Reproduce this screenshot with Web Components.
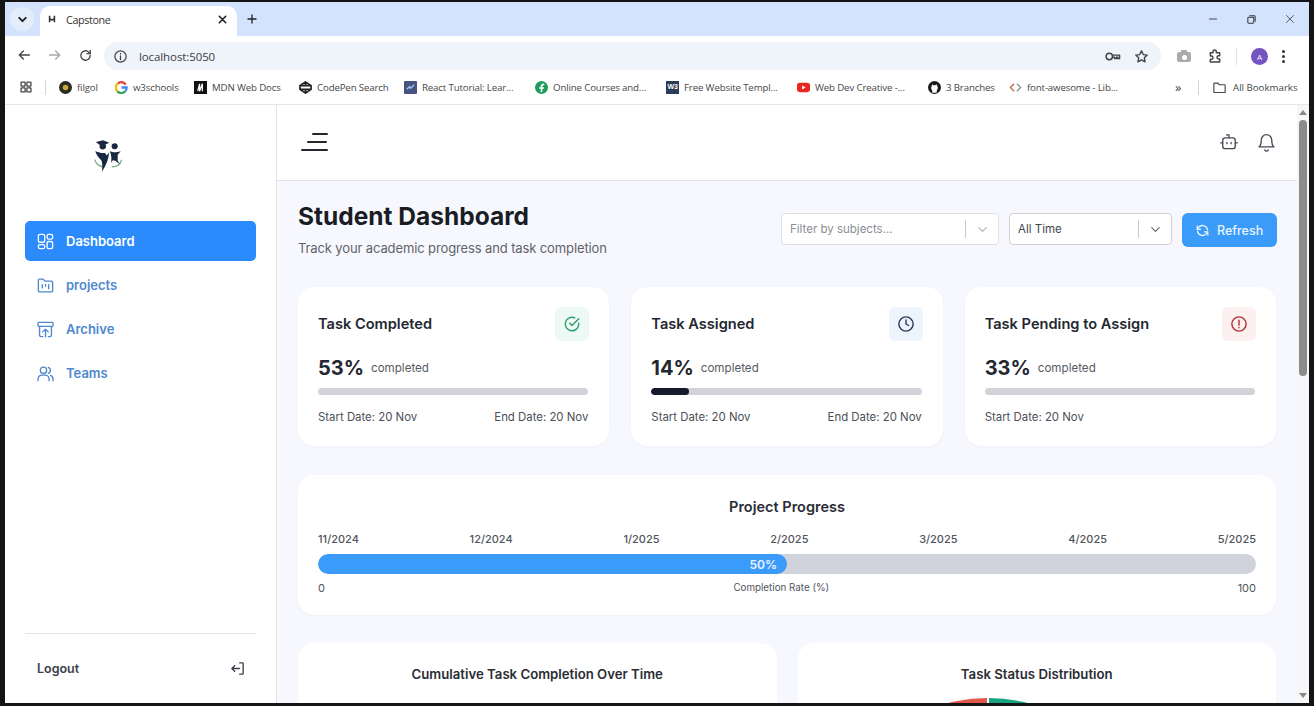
<!DOCTYPE html>
<html lang="en">
<head>
<meta charset="utf-8">
<title>Capstone</title>
<style>
  html, body { margin: 0; height: 100%; overflow: hidden; background: #141414; }
</style>
</head>
<body>
<app-shell></app-shell>
<script>
// icon paths, all drawn on a 24x24 grid
const ICONS = {
  dashboard: '<rect x="3" y="3" width="8" height="10" rx="2"/><rect x="14" y="3" width="7" height="6" rx="2"/><rect x="14" y="12" width="7" height="9" rx="2"/><rect x="3" y="16" width="8" height="5" rx="2"/>',
  projects: '<path d="M3 5.5A1.5 1.5 0 0 1 4.5 4H9l2.5 2.5h8A1.5 1.5 0 0 1 21 8v10.5a1.5 1.5 0 0 1-1.5 1.5h-15A1.5 1.5 0 0 1 3 18.500z"/><path d="M8 11v4M12 11v2M16 11v5"/>',
  archive: '<rect x="2.500" y="3" width="19" height="5" rx="1"/><path d="M4.500 8v11a2 2 0 0 0 2 2h2M19.500 8v11a2 2 0 0 1-2 2h-2"/><path d="M12 21v-9M8.500 15l3.500-3.500 3.500 3.500"/>',
  teams: '<circle cx="9.500" cy="8" r="4"/><path d="M2.500 21v-2a5 5 0 0 1 5-5h4a5 5 0 0 1 5 5v2"/><path d="M15.500 4.200a4 4 0 0 1 0 7.600M18.500 14.300a5 5 0 0 1 3 4.700v2"/>',
  logout: '<path d="M15 4h4a1 1 0 0 1 1 1v14a1 1 0 0 1-1 1h-4"/><path d="M15 12H4M8 8l-4 4 4 4"/>',
  bot: '<path d="M12 7V3.500H9"/><rect x="4.500" y="7" width="15" height="13" rx="3"/><path d="M2 13h2.500M19.500 13H22M9.500 12.500v1.500M14.500 12.500v1.500"/>',
  bell: '<path d="M6 9a6 6 0 0 1 12 0c0 6 2.500 8 2.500 8h-17S6 15 6 9"/><path d="M10 20.500a2.200 2.200 0 0 0 4 0"/>',
  refresh: '<path d="M20 11a8 8 0 0 0-14.500-3.500L3.500 10M3.500 4.500V10H9"/><path d="M4 13a8 8 0 0 0 14.500 3.500l2-2.500M20.500 19.500V14H15"/>',
  check: '<path d="M21 11v1a9 9 0 1 1-5.300-8.200"/><path d="M21 5l-9 9-3-3"/>',
  clock: '<circle cx="12" cy="12" r="9.500"/><path d="M12 6.500V12l3.500 2"/>',
  alert: '<circle cx="12" cy="12" r="9.500"/><path d="M12 7v6.500M12 16.500v.5"/>',
  chevron: '<path d="M6 9l6 6 6-6"/>',
  back: '<path d="M20 12H5M11 6l-6 6 6 6"/>',
  forward: '<path d="M4 12h15M13 6l6 6-6 6"/>',
  reload: '<path d="M19.500 12a7.500 7.500 0 1 1-2.300-5.400L19.500 9"/><path d="M19.500 4v5h-5"/>',
  info: '<circle cx="12" cy="12" r="9"/><path d="M12 11v6M12 7v1"/>',
  key: '<circle cx="7.500" cy="12" r="4.500"/><path d="M12 10h10v5h-2.500v-2h-2v2H15v-2h-3"/>',
  star: '<path d="M12 3l2.800 5.900 6.400.8-4.700 4.400 1.200 6.400L12 17.300l-5.700 3.200 1.200-6.400L2.800 9.700l6.400-.8z"/>',
  extension: '<path d="M9 5.500a2.500 2.500 0 0 1 5 0V7h5v4.500h-1.500a2.500 2.500 0 0 0 0 5H19V21H5v-4h1.500a2.500 2.500 0 0 0 0-5H5V7h4z"/>',
  folder: '<path d="M3 6a1 1 0 0 1 1-1h5.500l2 2.500H20a1 1 0 0 1 1 1V19a1 1 0 0 1-1 1H4a1 1 0 0 1-1-1z"/>',
  apps: '<rect x="3.500" y="3.500" width="7" height="7" rx="1"/><rect x="13.500" y="3.500" width="7" height="7" rx="1"/><rect x="3.500" y="13.500" width="7" height="7" rx="1"/><rect x="13.500" y="13.500" width="7" height="7" rx="1"/>',
  close: '<path d="M5 5l14 14M19 5L5 19"/>',
  plus: '<path d="M12 4v16M4 12h16"/>',
  minus: '<path d="M5 12h14"/>',
  restore: '<rect x="4" y="7" width="13" height="13" rx="2"/><path d="M8 4h10a2 2 0 0 1 2 2v10"/>',
};

class UiIcon extends HTMLElement {
  connectedCallback() {
    const size = this.getAttribute('size') || 18;
    const sw = this.getAttribute('sw') || 2;
    this.attachShadow({ mode: 'open' }).innerHTML = `
      <style>
        :host { display: inline-flex; flex: none; width: ${size}px; height: ${size}px; }
        svg { width: 100%; height: 100%; display: block; }
      </style>
      <svg viewBox="0 0 24 24" fill="none" stroke="currentColor" stroke-width="${sw}"
           stroke-linecap="round" stroke-linejoin="round">${ICONS[this.getAttribute('name')] || ''}</svg>`;
  }
}
customElements.define('ui-icon', UiIcon);

class BrowserTabs extends HTMLElement {
  constructor() {
    super();
    this.attachShadow({ mode: 'open' }).innerHTML = `
      <style>
        :host {
          display: flex; align-items: flex-end; height: 34px; background: #d3e3fd; color: #1f1f1f;
          font: 12px "Open Sans", sans-serif;
        }
        .menu {
          width: 24px; height: 24px; margin: 0 6px 5px 5px; border-radius: 50%; background: #e4edfc;
          display: flex; align-items: center; justify-content: center;
        }
        .tab {
          width: 197px; height: 30px; background: #fff; border-radius: 10px 10px 0 0;
          display: flex; align-items: center; padding: 0 9px 4px 8px; box-sizing: border-box; gap: 10px;
        }
        .title { flex: 1; font-size: 10.800px; letter-spacing: -.4px; color: #333; }
        .plus { margin: 0 0 11px 9px; display: flex; }
        .spacer { flex: 1; }
        .win { display: flex; align-items: center; gap: 27px; margin: 0 13px 11px 0; color: #333; }
        .fav { width: 8px; height: 8px; }
      </style>
      <div class="menu"><ui-icon name="chevron" size="13" sw="3.5"></ui-icon></div>
      <div class="tab">
        <svg class="fav" viewBox="0 0 10 10"><path d="M2 1v8M8 1v8M2 5l3 1 3-1" stroke="#333" stroke-width="2" fill="none"/></svg>
        <span class="title">Capstone</span>
        <ui-icon name="close" size="11" sw="3.500"></ui-icon>
      </div>
      <div class="plus"><ui-icon name="plus" size="12" sw="2.600"></ui-icon></div>
      <div class="spacer"></div>
      <div class="win">
        <ui-icon name="minus" size="12" sw="1.800"></ui-icon>
        <ui-icon name="restore" size="11" sw="2.200"></ui-icon>
        <ui-icon name="close" size="12" sw="1.500"></ui-icon>
      </div>`;
  }
}
customElements.define('browser-tabs', BrowserTabs);

class BrowserToolbar extends HTMLElement {
  constructor() {
    super();
    this.attachShadow({ mode: 'open' }).innerHTML = `
      <style>
        :host {
          display: flex; align-items: center; height: 34px; background: #fff; color: #444;
          font: 12px "Open Sans", sans-serif; padding-left: 11px; box-sizing: border-box;
        }
        .nav { display: flex; gap: 15px; align-items: center; margin: 4px 11px 0 0; }
        .dim { color: #a4a7ac; }
        .omni {
          width: 1057px; height: 28px; margin-top: 6px; border-radius: 14px; background: #eff3fa; box-sizing: border-box;
          display: flex; align-items: center; padding: 0 12px 0 9px; margin-right: 16px;
        }
        .omni .txt { margin-left: 11px; flex: 1; color: #3c4043; font-size: 11.500px; letter-spacing: -.1px; }
        .omni .r { display: flex; gap: 13px; align-items: center; color: #3f4246; }
        .ext { display: flex; align-items: center; margin-top: 6px; }
        .cam { position: relative; width: 14px; height: 10px; margin-top: 2px; border-radius: 2px; background: #a8abaf; display: flex; align-items: center; justify-content: center; }
        .cam::before { content: ""; position: absolute; top: -2px; left: 4px; width: 6px; height: 2px; background: #a8abaf; }
        .cam i { width: 5px; height: 5px; border-radius: 50%; background: #fff; }
        .puzzle { margin-left: 16px; }
        .sep { width: 1px; height: 17px; background: #e0e2e6; margin: 0 14px 0 13px; }
        .avatar { width: 17px; height: 17px; border-radius: 50%; background: #7354c0; color: #fff; font-size: 8px; display: flex; align-items: center; justify-content: center; }
        .dots { display: flex; flex-direction: column; gap: 2px; margin-left: 14px; }
        .dots i { width: 3px; height: 3px; border-radius: 50%; background: #333; }
      </style>
      <div class="nav">
        <ui-icon name="back" size="16" sw="2"></ui-icon>
        <ui-icon class="dim" name="forward" size="16" sw="2"></ui-icon>
        <ui-icon name="reload" size="15" sw="2.200"></ui-icon>
      </div>
      <div class="omni">
        <ui-icon name="info" size="15" sw="2"></ui-icon>
        <span class="txt">localhost:5050</span>
        <div class="r">
          <ui-icon name="key" size="17" sw="2"></ui-icon>
          <ui-icon name="star" size="15" sw="2.200"></ui-icon>
        </div>
      </div>
      <div class="ext">
        <div class="cam"><i></i></div>
        <ui-icon class="puzzle" name="extension" size="16" sw="2.200"></ui-icon>
        <div class="sep"></div>
        <div class="avatar">A</div>
        <div class="dots"><i></i><i></i><i></i></div>
      </div>`;
  }
}
customElements.define('browser-toolbar', BrowserToolbar);

// one bookmark: favicon goes in the slot, "w" fixes the width of the item
class BookMark extends HTMLElement {
  connectedCallback() {
    this.attachShadow({ mode: 'open' }).innerHTML = `
      <style>
        :host { display: flex; align-items: center; gap: 5px; flex: none; width: ${this.getAttribute('w')}px; white-space: nowrap; }
        ::slotted(svg) { width: 13px; height: 13px; flex: none; }
        span { color: #474747; font-size: 9.700px; letter-spacing: -.15px; }
      </style>
      <slot></slot><span>${this.getAttribute('label')}</span>`;
  }
}
customElements.define('book-mark', BookMark);

class BookmarkBar extends HTMLElement {
  constructor() {
    super();
    this.attachShadow({ mode: 'open' }).innerHTML = `
      <style>
        :host {
          display: flex; align-items: center; height: 35px; background: #fff; border-bottom: 1px solid #e6e6e6;
          box-sizing: border-box; font: 9.700px "Open Sans", sans-serif; padding-left: 14px;
        }
        .sep { width: 1px; height: 15px; background: #d6d6d6; margin: 0 13px 0 12px; }
        .items { display: flex; gap: 14px; }
        .more { margin-left: 54px; color: #444; font-size: 13px; width: 14px; }
        .end { display: flex; align-items: center; margin-left: 9px; gap: 6px; color: #474747; }
        .end .sep { margin: 0 7px 0 0; }
      </style>
      <ui-icon name="apps" size="14" sw="2.200" style="color:#444"></ui-icon>
      <div class="sep"></div>
      <div class="items">
        <book-mark w="42" label="filgol"><svg viewBox="0 0 14 14"><circle cx="7" cy="7" r="7" fill="#2b2b22"/><circle cx="7" cy="7" r="3" fill="#c9a93a"/></svg></book-mark>
        <book-mark w="65" label="w3schools"><svg viewBox="0 0 14 14" fill="none" stroke-width="2.500"><path d="M11.500 4A5.500 5.500 0 0 0 3 2.800" stroke="#e94235"/><path d="M3 2.800A5.500 5.500 0 0 0 2.500 11" stroke="#fabb05"/><path d="M2.500 11A5.500 5.500 0 0 0 11 11" stroke="#34a853"/><path d="M11 11c1-1 1.500-2 1.500-4H7" stroke="#4285f4"/></svg></book-mark>
        <book-mark w="91" label="MDN Web Docs"><svg viewBox="0 0 14 14"><rect width="14" height="14" fill="#111"/><path d="M4 11l2-8v8l3-8v8" stroke="#fff" fill="none" stroke-width="1.300"/></svg></book-mark>
        <book-mark w="91" label="CodePen Search"><svg viewBox="0 0 14 14" fill="none" stroke="#222" stroke-width="1.800"><path d="M7 1l6 4v4l-6 4-6-4V5zM7 1v4l-6 0M7 13V9l6 0M1 9h12M1 5h12"/></svg></book-mark>
        <book-mark w="117" label="React Tutorial: Lear..."><svg viewBox="0 0 14 14"><rect width="14" height="14" rx="1" fill="#46537f"/><path d="M3 9l3-3 1 2 4-4" stroke="#9fc3ef" fill="none" stroke-width="1.500"/></svg></book-mark>
        <book-mark w="117" label="Online Courses and..."><svg viewBox="0 0 14 14"><circle cx="7" cy="7" r="7" fill="#1d9c5c"/><path d="M7 12V6a2 2 0 0 1 3-2M4.500 7.500h5" stroke="#fff" fill="none" stroke-width="1.800"/></svg></book-mark>
        <book-mark w="117" label="Free Website Templ..."><svg viewBox="0 0 14 14"><rect width="14" height="14" fill="#2b3a55"/><text x="1.500" y="9" font-size="7.500" font-family="Liberation Sans" font-weight="700" fill="#fff">W3</text></svg></book-mark>
        <book-mark w="117" label="Web Dev Creative -..."><svg viewBox="0 0 14 14"><rect y="2" width="14" height="10" rx="3" fill="#e8281e"/><path d="M5.500 4.800v4.400L9.300 7z" fill="#fff"/></svg></book-mark>
        <book-mark w="67" label="3 Branches"><svg viewBox="0 0 14 14"><circle cx="7" cy="7" r="7" fill="#1a1a1a"/><path d="M4 14v-3c-1-1-1.500-2-1.500-3.500 0-1 .5-2 1-2.500 0-1 0-1.500.3-2 1 0 1.500.5 2 1h2.400c.5-.5 1-1 2-1 .3.500.3 1 .3 2 .5.500 1 1.500 1 2.500 0 1.500-.5 2.500-1.500 3.500v3z" fill="#fff" transform="translate(1.400 1.400) scale(.8)"/></svg></book-mark>
        <book-mark w="112" label="font-awesome - Lib..."><svg viewBox="0 0 14 14" fill="none" stroke-width="1.400"><path d="M5.500 3L1.500 7l4 4" stroke="#c5683a"/><path d="M8.500 3l4 4-4 4" stroke="#8a8f99"/></svg></book-mark>
      </div>
      <div class="more">»</div>
      <div class="end">
        <div class="sep"></div>
        <ui-icon name="folder" size="15" sw="1.800" style="color:#444"></ui-icon>
        <span>All Bookmarks</span>
      </div>`;
  }
}
customElements.define('bookmark-bar', BookmarkBar);

class NavItem extends HTMLElement {
  connectedCallback() {
    const active = this.hasAttribute('active');
    this.attachShadow({ mode: 'open' }).innerHTML = `
      <style>
        :host {
          display: flex; align-items: center; gap: 11px; height: ${active ? 40 : 44}px; padding-left: 11px;
          border-radius: 5px; font-size: 13px; font-weight: 600;
          color: ${active ? '#fff' : '#4f88cd'}; background: ${active ? '#2b8bfd' : 'transparent'};
          ${active ? 'margin-bottom: 2px;' : ''}
        }
      </style>
      <ui-icon name="${this.getAttribute('icon')}" size="19" sw="1.700"></ui-icon>
      <slot></slot>`;
  }
}
customElements.define('nav-item', NavItem);

class SideNav extends HTMLElement {
  constructor() {
    super();
    this.attachShadow({ mode: 'open' }).innerHTML = `
      <style>
        :host {
          display: flex; flex-direction: column; flex: none; width: 272px; box-sizing: border-box;
          background: #fff; border-right: 1px solid #e4e4ea; padding: 0 20px;
        }
        .logo { display: flex; padding: 34px 0 0 66px; height: 116px; box-sizing: border-box; }
        .logo svg { width: 34px; height: 34px; }
        nav { display: flex; flex-direction: column; }
        .foot {
          margin-top: auto; border-top: 1px solid #e6e6ea; height: 70px; box-sizing: border-box; padding: 0 10px 1px 12px;
          display: flex; align-items: center; justify-content: space-between;
          color: #3a404c; font-size: 12.500px; font-weight: 600;
        }
      </style>
      <div class="logo">
        <svg viewBox="0 0 28 28">
          <path d="M3 17c1 4 5 6 8 6M25 17c0 3-3 6-8 6" stroke="#7fae96" fill="none" stroke-width="1.100"/>
          <path d="M4 2.500l6-1.500 5 2-3 1.500.5 2A3 3 0 0 1 7 7l.2-2z" fill="#182843"/>
          <path d="M3.500 10l5 1.500h3l1.500 2 2-2.500c-.5 5-2 10-6 16 .5-4 .5-7-.5-9.500C6 15 4.500 13 3.500 10z" fill="#182843"/>
          <circle cx="19.500" cy="6" r="2.500" fill="#182843"/>
          <path d="M15.500 10l3 1h2.500l3.500-1-2.500 3v5l2 3-4-3-2-.5-1.500 2c.5-3 .5-6-1-9.500z" fill="#182843"/>
        </svg>
      </div>
      <nav>
        <nav-item active icon="dashboard">Dashboard</nav-item>
        <nav-item icon="projects">projects</nav-item>
        <nav-item icon="archive">Archive</nav-item>
        <nav-item icon="teams">Teams</nav-item>
      </nav>
      <div class="foot"><span>Logout</span><ui-icon name="logout" size="17" sw="1.900"></ui-icon></div>`;
  }
}
customElements.define('side-nav', SideNav);

class TopBar extends HTMLElement {
  constructor() {
    super();
    this.attachShadow({ mode: 'open' }).innerHTML = `
      <style>
        :host {
          display: flex; align-items: center; justify-content: space-between; flex: none; height: 76px;
          background: #fff; border-bottom: 1px solid #e2e3e8; box-sizing: border-box; padding: 0 20px 0 24px; color: #454a52;
        }
        .burger { display: flex; flex-direction: column; align-items: flex-end; gap: 6px; width: 27px; margin-top: -2px; }
        .burger i { display: block; height: 2px; background: #23272e; border-radius: 1px; }
        .r { display: flex; align-items: center; gap: 17px; margin-top: -1px; }
      </style>
      <div class="burger"><i style="width:16px"></i><i style="width:20px;margin-right:1px"></i><i style="width:27px"></i></div>
      <div class="r"><ui-icon name="bot" size="20" sw="1.600"></ui-icon><ui-icon name="bell" size="21" sw="1.500"></ui-icon></div>`;
  }
}
customElements.define('top-bar', TopBar);

class SelectBox extends HTMLElement {
  connectedCallback() {
    const ph = this.hasAttribute('placeholder');
    this.attachShadow({ mode: 'open' }).innerHTML = `
      <style>
        :host {
          display: flex; align-items: center; flex: none; width: ${this.getAttribute('w')}px; height: 32px; box-sizing: border-box;
          background: #fff; border: 1px solid ${ph ? '#dfe0e6' : '#cfd0d6'}; border-radius: 4px; padding: 0 8px;
          font-size: 11.500px; color: ${ph ? '#8a8d94' : '#43464d'};
        }
        span { flex: 1; }
        i { width: 1px; height: 18px; background: #c8c9ce; margin-right: 9px; }
        ui-icon { color: ${ph ? '#b4b6bb' : '#6a6d73'}; }
      </style>
      <span><slot></slot></span><i></i><ui-icon name="chevron" size="15" sw="2"></ui-icon>`;
  }
}
customElements.define('select-box', SelectBox);

class StatCard extends HTMLElement {
  connectedCallback() {
    const a = n => this.getAttribute(n);
    const end = a('end') ? `<span>End Date: ${a('end')}</span>` : '';
    const fill = a('fill') ? `<div class="fill" style="width:${a('fill')}"></div>` : '';
    this.attachShadow({ mode: 'open' }).innerHTML = `
      <style>
        :host {
          display: block; flex: 1 1 0; min-width: 0; box-sizing: border-box; height: 159px; padding: 20px 21px 0 20px;
          background: #fff; border-radius: 16px; box-shadow: 0 1px 3px rgba(60,70,110,.04);
        }
        .head { display: flex; align-items: center; justify-content: space-between; height: 34px; }
        h3 { margin: 0; font-size: 14.600px; font-weight: 600; color: #23272f; }
        .tile { width: 34px; height: 34px; margin-right: -1px; border-radius: 6px; display: flex; align-items: center; justify-content: center; background: ${a('tile')}; color: ${a('tint')}; }
        .val { display: flex; align-items: center; gap: 7px; margin-top: 13px; height: 28px; }
        b { font-size: 20px; font-weight: 700; color: #23272f; }
        .val span { font-size: 11.600px; color: #575b63; }
        .bar { height: 7px; margin-top: 6px; border-radius: 4px; background: #d2d3da; overflow: hidden; }
        .fill { height: 100%; background: #171a2b; border-radius: 4px; }
        .dates { display: flex; justify-content: space-between; margin-top: 15px; font-size: 11.400px; color: #4b4f57; }
      </style>
      <div class="head"><h3>${a('title')}</h3><div class="tile"><ui-icon name="${a('icon')}" size="18" sw="1.900"></ui-icon></div></div>
      <div class="val"><b>${a('pct')}</b><span>completed</span></div>
      <div class="bar">${fill}</div>
      <div class="dates"><span>Start Date: ${a('start')}</span>${end}</div>`;
  }
}
customElements.define('stat-card', StatCard);

class ProjectProgress extends HTMLElement {
  constructor() {
    super();
    const months = ['11/2024', '12/2024', '1/2025', '2/2025', '3/2025', '4/2025', '5/2025'];
    this.attachShadow({ mode: 'open' }).innerHTML = `
      <style>
        :host {
          display: block; flex: none; height: 140px; box-sizing: border-box; padding: 22px 20px 0; background: #fff; border-radius: 16px;
          box-shadow: 0 1px 3px rgba(60,70,110,.04);
        }
        h3 { margin: 0; text-align: center; font-size: 14.500px; font-weight: 600; color: #2a2d35; line-height: 20px; }
        .row { display: flex; justify-content: space-between; color: #50545c; }
        .months { margin-top: 16px; font-size: 11px; font-weight: 500; height: 13px; line-height: 13px; }
        .track { height: 20px; margin-top: 8px; border-radius: 10px; background: #d0d2dc; overflow: hidden; }
        .fill {
          width: 50%; height: 100%; background: #3a9bfb; border-radius: 10px; color: #e8f3ff; font-size: 12px; font-weight: 600;
          display: flex; align-items: center; justify-content: flex-end; padding-right: 10px; box-sizing: border-box;
        }
        .scale { margin-top: 7px; line-height: 14px; font-size: 11px; align-items: center; }
        .scale .mid { font-size: 9.800px; }
      </style>
      <h3>Project Progress</h3>
      <div class="row months">${months.map(m => `<span>${m}</span>`).join('')}</div>
      <div class="track"><div class="fill">50%</div></div>
      <div class="row scale"><span>0</span><span class="mid">Completion Rate (%)</span><span>100</span></div>`;
  }
}
customElements.define('project-progress', ProjectProgress);

class ChartCard extends HTMLElement {
  connectedCallback() {
    this.attachShadow({ mode: 'open' }).innerHTML = `
      <style>
        :host { display: block; flex: 1 1 0; min-width: 0; height: 340px; box-sizing: border-box; padding-top: 22px; background: #fff; border-radius: 16px; }
        h3 { margin: 0; text-align: center; font-size: 13.200px; font-weight: 600; color: #2a2d35; line-height: 18px; }
      </style>
      <h3>${this.getAttribute('title')}</h3>
      <slot></slot>`;
  }
}
customElements.define('chart-card', ChartCard);

class DashHead extends HTMLElement {
  constructor() {
    super();
    this.attachShadow({ mode: 'open' }).innerHTML = `
      <style>
        :host { display: flex; justify-content: space-between; align-items: flex-start; flex: none; height: 86px; }
        h1 { margin: 0; font-size: 24.500px; font-weight: 700; color: #1a1d24; line-height: 30px; }
        p { margin: 9px 0 0; font-size: 13px; letter-spacing: -.12px; color: #5f636b; line-height: 17px; }
        .tools { display: flex; gap: 10px; margin: 12px -1px 0 0; }
        .refresh {
          display: flex; align-items: center; gap: 7px; width: 95px; height: 34px; box-sizing: border-box; padding-left: 13px;
          background: #3a9bf8; color: #e9f4ff; border-radius: 6px; font-size: 12.500px; font-weight: 500;
        }
      </style>
      <div><h1>Student Dashboard</h1><p>Track your academic progress and task completion</p></div>
      <div class="tools">
        <select-box w="218" placeholder>Filter by subjects...</select-box>
        <select-box w="163">All Time</select-box>
        <div class="refresh"><ui-icon name="refresh" size="15" sw="2"></ui-icon>Refresh</div>
      </div>`;
  }
}
customElements.define('dash-head', DashHead);

class FakeScrollbar extends HTMLElement {
  constructor() {
    super();
    this.attachShadow({ mode: 'open' }).innerHTML = `
      <style>
        :host { display: flex; flex-direction: column; align-items: center; flex: none; width: 12px; background: #f7f7fa; }
        .up, .down { width: 0; height: 0; border-left: 4px solid transparent; border-right: 4px solid transparent; }
        .up { margin-top: 5px; border-bottom: 5px solid #8a8a8a; }
        .thumb { width: 8px; height: 256px; margin-top: 5px; border-radius: 4px; background: #8b8b8b; }
        .down { margin-top: auto; margin-bottom: 5px; border-top: 5px solid #8a8a8a; }
      </style>
      <div class="up"></div><div class="thumb"></div><div class="down"></div>`;
  }
}
customElements.define('fake-scrollbar', FakeScrollbar);

class AppShell extends HTMLElement {
  constructor() {
    super();
    this.attachShadow({ mode: 'open' }).innerHTML = `
      <style>
        :host {
          display: flex; flex-direction: column; width: 1314px; height: 706px; box-sizing: border-box;
          padding: 2px 5px 3px 5px; font-family: Inter, "Liberation Sans", sans-serif;
        }
        .app { flex: 1; min-height: 0; display: flex; overflow: hidden; }
        .main { flex: 1; min-width: 0; display: flex; flex-direction: column; background: #f7f8fe; overflow: hidden; }
        .content { flex: 1; min-height: 0; display: flex; flex-direction: column; padding: 20px 21px 0; overflow: hidden; }
        .cards { display: flex; gap: 22px; flex: none; }
        .spaced { margin-top: 29px; }
        .charts { display: flex; gap: 21px; flex: none; margin-top: 28px; }
      </style>
      <browser-tabs></browser-tabs>
      <browser-toolbar></browser-toolbar>
      <bookmark-bar></bookmark-bar>
      <div class="app">
        <side-nav></side-nav>
        <div class="main">
          <top-bar></top-bar>
          <div class="content">
            <dash-head></dash-head>
            <div class="cards">
              <stat-card title="Task Completed" icon="check" tile="#edf9f4" tint="#2f9e6e" pct="53%" start="20 Nov" end="20 Nov"></stat-card>
              <stat-card title="Task Assigned" icon="clock" tile="#eef4fd" tint="#2a3a55" pct="14%" fill="14%" start="20 Nov" end="20 Nov"></stat-card>
              <stat-card title="Task Pending to Assign" icon="alert" tile="#fdf0f1" tint="#b3302f" pct="33%" start="20 Nov"></stat-card>
            </div>
            <project-progress class="spaced"></project-progress>
            <div class="charts">
              <chart-card title="Cumulative Task Completion Over Time"></chart-card>
              <chart-card title="Task Status Distribution">
                <svg viewBox="0 0 320 320" style="display:block;margin:15px 0 0 30px;width:320px;height:320px">
                  <path d="M159 160L159 0A160 160 0 0 0 0 160z" fill="#e2574c"/>
                  <path d="M161 160L161 0A160 160 0 0 1 320 160z" fill="#16a37f"/>
                </svg>
              </chart-card>
            </div>
          </div>
        </div>
        <fake-scrollbar></fake-scrollbar>
      </div>`;
  }
}
customElements.define('app-shell', AppShell);
</script>
</body>
</html>
